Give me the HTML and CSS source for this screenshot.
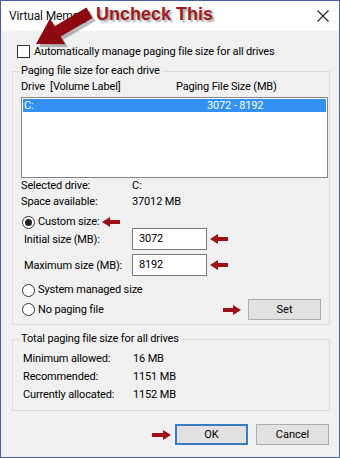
FILE: index.html
```html
<!DOCTYPE html>
<html lang="en">
<head>
    <meta charset="UTF-8">
    <meta name="viewport" content="width=device-width, initial-scale=1.0">
    <title>Virtual Memory</title>
    <link rel="stylesheet" href="styles.css">
</head>
<body>
    <div class="window">
        <div class="titlebar">
            <span class="title">Virtual Memory</span>
            <svg class="close" width="12" height="12" viewBox="0 0 12 12">
                <path d="M0.5 0.5 L11.5 11.5 M11.5 0.5 L0.5 11.5" stroke="#222" stroke-width="1.1" fill="none"/>
            </svg>
        </div>

        <div class="dialog">
            <label class="check-row">
                <span class="checkbox"></span>
                <span>Automatically manage paging file size for all drives</span>
            </label>

            <fieldset class="group group-drive">
                <legend>Paging file size for each drive</legend>
                <div class="list-head">
                    <span class="col-drive">Drive&nbsp; [Volume Label]</span>
                    <span>Paging File Size (MB)</span>
                </div>
                <div class="listbox">
                    <div class="list-row selected">
                        <span class="col-name">C:</span>
                        <span>3072 - 8192</span>
                    </div>
                </div>

                <div class="info">
                    <span>Selected drive:</span><span>C:</span>
                    <span>Space available:</span><span>37012 MB</span>
                </div>

                <div class="radio-row custom">
                    <span class="radio checked"></span>
                    <span>Custom size:</span>
                    <svg class="arrow" width="18" height="10" viewBox="0 0 18 10"><polygon points="0,5 8,0 8,3 18,3 18,7 8,7 8,10"/></svg>
                </div>
                <div class="size-row first">
                    <span class="size-label">Initial size (MB):</span>
                    <span class="textbox">3072</span>
                    <svg class="arrow" width="18" height="10" viewBox="0 0 18 10"><polygon points="0,5 8,0 8,3 18,3 18,7 8,7 8,10"/></svg>
                </div>
                <div class="size-row">
                    <span class="size-label">Maximum size (MB):</span>
                    <span class="textbox">8192</span>
                    <svg class="arrow" width="18" height="10" viewBox="0 0 18 10"><polygon points="0,5 8,0 8,3 18,3 18,7 8,7 8,10"/></svg>
                </div>
                <div class="radio-row system">
                    <span class="radio"></span>
                    <span>System managed size</span>
                </div>
                <div class="radio-row nopaging">
                    <span class="radio"></span>
                    <span>No paging file</span>
                    <svg class="arrow set-arrow" width="18" height="10" viewBox="0 0 18 10"><polygon points="18,5 10,0 10,3 0,3 0,7 10,7 10,10"/></svg>
                    <button class="btn set">Set</button>
                </div>
            </fieldset>

            <fieldset class="group group-total">
                <legend>Total paging file size for all drives</legend>
                <div class="totals">
                    <span>Minimum allowed:</span><span>16 MB</span>
                    <span>Recommended:</span><span>1151 MB</span>
                    <span>Currently allocated:</span><span>1152 MB</span>
                </div>
            </fieldset>

            <div class="buttons">
                <svg class="arrow" width="19" height="10" viewBox="0 0 19 10"><polygon points="19,5 11,0 11,3 0,3 0,7 11,7 11,10"/></svg>
                <button class="btn ok">OK</button>
                <button class="btn">Cancel</button>
            </div>
        </div>

        <!-- annotation over the dialog -->
        <div class="callout">
            <svg class="big-arrow" width="100" height="50" viewBox="0 0 100 50">
                <polygon class="shadow" points="38,46 52,20.5 56.6,28.2 88.5,9.5 94.5,19.9 62.6,38.6 67.2,46.3"/>
                <polygon points="35,43 49,17.5 53.6,25.2 85.5,6.5 91.5,16.9 59.6,35.6 64.2,43.3"/>
            </svg>
            <span class="callout-text">Uncheck This</span>
        </div>
    </div>
</body>
</html>
```

FILE: styles.css
```css
body {
    margin: 0;
    font-family: 'Roboto', 'Liberation Sans', sans-serif;
    font-size: 11px;
    letter-spacing: -0.15px;
    color: #000;
    background: #fff;
}
.window {
    position: relative;
    width: 340px;
    height: 458px;
    box-sizing: border-box;
    border: 1px solid #4b5cb4;
    background: #f0f0f0;
    overflow: hidden;
}
.titlebar {
    height: 30px;
    background: #fff;
    display: flex;
    align-items: center;
    padding-left: 8px;
}
.title {
    color: #111;
    font-size: 12px;
}
.close {
    margin-left: auto;
    margin-right: 10px;
}
.dialog {
    padding: 0 9px 0 11px;
}
.check-row {
    display: flex;
    align-items: center;
    height: 13px;
    margin-top: 14px;
    line-height: 13px;
}
.checkbox {
    width: 11px;
    height: 11px;
    border: 1px solid #333;
    background: #fff;
    margin-left: 5px;
    margin-right: 4px;
}
.group {
    margin: 0;
    border: 1px solid #dcdcdc;
    padding: 0 0 4px 8px;
}
.group legend {
    padding: 0 2px;
    margin-left: -2px;
    line-height: 14px;
}
.group-drive {
    margin-top: 6px;
}
.list-head {
    display: flex;
    line-height: 14px;
    margin-top: 2px;
}
.col-drive {
    width: 155px;
}
.listbox {
    margin-top: 3px;
    height: 79px;
    border: 1px solid #828790;
    background: #fff;
    margin-right: 1px;
}
.list-row {
    display: flex;
    height: 13px;
    line-height: 13px;
    margin: 1px;
    padding-left: 1px;
}
.list-row.selected {
    background: #3390f5;
    color: #fff;
}
.col-name {
    width: 183px;
}
.info, .totals {
    display: grid;
    grid-template-columns: 111px auto;
    line-height: 16px;
}
.radio-row {
    display: flex;
    align-items: center;
    height: 14px;
    line-height: 14px;
}
.radio {
    box-sizing: border-box;
    width: 13px;
    height: 13px;
    border: 1px solid #333;
    border-radius: 50%;
    background: #fff;
    margin-left: 1px;
    margin-right: 3px;
    position: relative;
}
.radio.checked::after {
    content: '';
    position: absolute;
    left: 2px;
    top: 2px;
    width: 7px;
    height: 7px;
    border-radius: 50%;
    background: #222;
}
.radio-row.custom {
    margin-top: 5px;
}
.radio-row.custom .arrow {
    margin-left: 3px;
}
.arrow {
    fill: #9a1016;
    flex: none;
}
.size-row {
    display: flex;
    align-items: center;
    height: 22px;
    margin-top: 4px;
}
.size-row.first {
    margin-top: -1px;
}
.size-label {
    width: 108px;
    padding-left: 3px;
}
.textbox {
    box-sizing: border-box;
    width: 75px;
    height: 22px;
    border: 1px solid #7a7a7a;
    background: #fff;
    padding-left: 6px;
    line-height: 20px;
    margin-right: 3px;
}
.radio-row.system {
    margin-top: 7px;
}
.radio-row.nopaging {
    margin-top: 2px;
    height: 21px;
}
.set-arrow {
    margin-left: auto;
    margin-right: 7px;
}
.btn {
    font-family: inherit;
    font-size: 11px;
    color: #000;
    background: #e1e1e1;
    border: 1px solid #adadad;
    width: 73px;
    height: 21px;
    padding: 0;
}
.btn.set {
    margin-right: 8px;
}
.group-total {
    margin-top: 7px;
    padding-bottom: 6px;
    padding-left: 10px;
}
.group-total legend {
    margin-left: -4px;
}
.totals {
    line-height: 18px;
    margin-top: 4px;
    grid-template-columns: 110px auto;
}
.buttons {
    display: flex;
    align-items: center;
    justify-content: flex-end;
    margin-top: 13px;
    padding-right: 1px;
}
.buttons .arrow {
    margin-right: 4px;
}
.btn.ok {
    border: 2px solid #3b7cc0;
    margin-right: 8px;
}
.callout {
    position: absolute;
    left: 0;
    top: 0;
}
.big-arrow {
    position: absolute;
    left: 0;
    top: 0;
    fill: #8c0a10;
}
.big-arrow .shadow {
    fill: rgba(60, 60, 60, 0.35);
}
.callout-text {
    position: absolute;
    left: 95px;
    top: 3px;
    font-family: 'Liberation Sans', sans-serif;
    font-weight: bold;
    font-size: 18px;
    letter-spacing: 0;
    color: #9b1b1e;
    white-space: nowrap;
    text-shadow: 2px 2px 2px rgba(60, 60, 60, 0.45);
}
```
